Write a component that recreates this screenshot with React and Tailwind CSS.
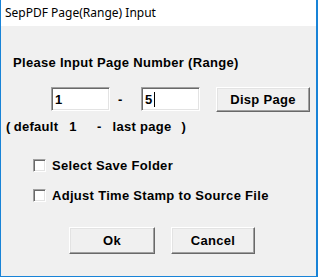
import React from 'react';

const bold = "font-['Liberation_Sans',Arial,sans-serif] font-bold text-[13px] tracking-[0.3px] text-black leading-[15px]";

const Field = ({ value, caret }) => (
  <div className="w-[59px] h-[24px] bg-white border border-t-[#a0a0a0] border-l-[#a0a0a0] border-b-white border-r-white shadow-[inset_1px_1px_0_#696969,inset_-1px_-1px_0_#e3e3e3] flex items-center pl-[3px]">
    <span className={bold}>{value}</span>
    {caret && <span className="w-px h-[15px] bg-black ml-px" />}
  </div>
);

const Button = ({ label, className }) => (
  <button
    className={`${className} ${bold} flex items-center justify-center bg-[#f0f0f0] border border-t-white border-l-white border-b-[#696969] border-r-[#696969] shadow-[inset_-1px_-1px_0_#a0a0a0,inset_1px_1px_0_#e3e3e3]`}
  >
    {label}
  </button>
);

const Check = ({ label, className }) => (
  <div className={`flex items-center h-[13px] ml-[32px] ${className}`}>
    <span className="w-[13px] h-[13px] bg-white border border-t-[#a0a0a0] border-l-[#a0a0a0] border-b-white border-r-white shadow-[inset_1px_1px_0_#696969,inset_-1px_-1px_0_#e3e3e3]" />
    <span className={`${bold} ml-[6px]`}>{label}</span>
  </div>
);

export default function App() {
  return (
    <div className="w-[318px] h-[277px] flex flex-col bg-[#f0f0f0] border-l border-r-2 border-b border-[#1883d7] overflow-hidden">
      {/* Title bar */}
      <div className="h-[26px] bg-white flex items-center pl-[4px] shrink-0">
        <span className="font-['Noto_Sans',sans-serif] text-[12px] text-black">SepPDF Page(Range) Input</span>
      </div>

      <div className={`${bold} mt-[29px] ml-[12px]`}>Please Input Page Number (Range)</div>

      {/* Range row */}
      <div className="flex items-start mt-[17px] ml-[50px]">
        <Field value="1" />
        <div className={`${bold} w-[31px] h-[24px] flex items-center pl-[8px]`}>-</div>
        <Field value="5" caret />
        <Button label="Disp Page" className="ml-[16px] w-[94px] h-[25px]" />
      </div>

      <div className={`${bold} flex mt-[7px] ml-[5px]`}>
        <span>(</span>
        <span className="ml-[3px]">default</span>
        <span className="ml-[11px]">1</span>
        <span className="ml-[20px]">-</span>
        <span className="ml-[11px]">last page</span>
        <span className="ml-[10px]">)</span>
      </div>

      <Check label="Select Save Folder" className="mt-[25px]" />
      <Check label="Adjust Time Stamp to Source File" className="mt-[17px]" />

      <div className="flex mt-[25px] ml-[68px]">
        <Button label="Ok" className="w-[86px] h-[27px]" />
        <Button label="Cancel" className="ml-[16px] w-[84px] h-[27px]" />
      </div>
    </div>
  );
}
